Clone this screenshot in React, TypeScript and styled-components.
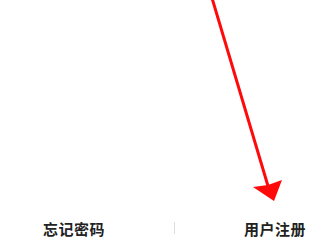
import React from "react";
import styled, { createGlobalStyle } from "styled-components";

const Global = createGlobalStyle`
  html, body { margin: 0; padding: 0; background: #ffffff; overflow: hidden; }
  body { font-family: "Noto Sans CJK SC", "Noto Sans", sans-serif; }
`;

const Page = styled.div`
  width: 320px;
  height: 240px;
  display: flex;
  flex-direction: column;
  background: #ffffff;
`;

const Canvas = styled.svg`
  display: block;
  width: 320px;
  height: 216px;
  flex: none;
`;

const Footer = styled.div`
  height: 24px;
  display: flex;
  align-items: center;
  padding-left: 43px;
  gap: 69px;
`;

const Link = styled.span`
  font-size: 15px;
  line-height: 15px;
  font-weight: 700;
  color: #222222;
  white-space: nowrap;
  letter-spacing: 0.5px;
`;

const Divider = styled.span`
  width: 1px;
  height: 12px;
  background: #dcdcdc;
`;

export default function App() {
  return (
    <>
      <Global />
      <Page>
        <Canvas viewBox="0 0 320 216">
          <line x1="212" y1="-2" x2="268" y2="186" stroke="#ff0a0a" strokeWidth="3" />
          <polygon points="274,201 253,187 268,185 282,180" fill="#ff0a0a" />
        </Canvas>
        <Footer>
          <Link>忘记密码</Link>
          <Divider />
          <Link>用户注册</Link>
        </Footer>
      </Page>
    </>
  );
}
